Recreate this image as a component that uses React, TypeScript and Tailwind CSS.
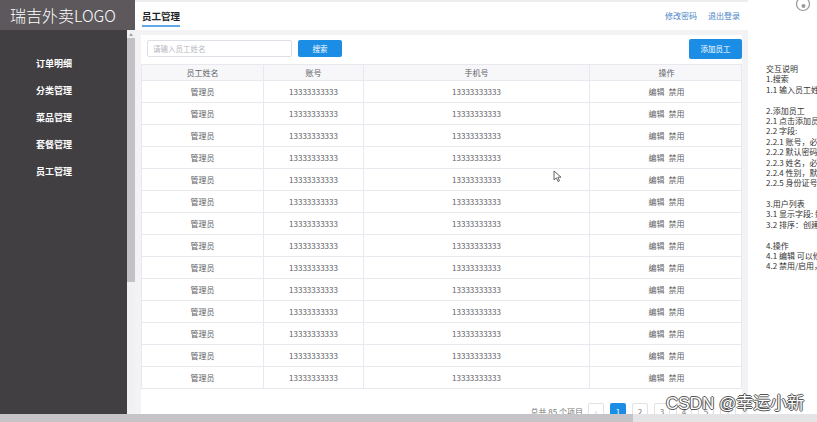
const menus = ['订单明细', '分类管理', '菜品管理', '套餐管理', '员工管理'];

const rows = Array.from({ length: 14 }, () => ({
  name: '管理员',
  account: '13333333333',
  phone: '13333333333',
}));

const notes = [
  '交互说明',
  '1.搜索',
  '1.1 输入员工姓名，点击搜索按钮',
  '',
  '2.添加员工',
  '2.1 点击添加员工按钮，弹出窗口',
  '2.2 字段:',
  '2.2.1 账号，必填，不可重复',
  '2.2.2 默认密码 123456',
  '2.2.3 姓名，必填',
  '2.2.4 性别，默认男',
  '2.2.5 身份证号，必填',
  '',
  '3.用户列表',
  '3.1 显示字段: 姓名、账号、手机号',
  '3.2 排序：创建时间倒序',
  '',
  '4.操作',
  '4.1 编辑 可以修改员工信息',
  '4.2 禁用/启用，管理员不可禁用',
];

const cols = 'grid grid-cols-[122px_100px_226px_153px]';

export default function App() {
  return (
    <div className="relative flex h-[422px] w-[817px] flex-col overflow-hidden bg-white font-['Noto_Sans_CJK_SC','Noto_Sans',sans-serif]">
      <div className="flex h-[414px]">
        <div className="flex w-[748px] flex-col">
          {/* 顶部 */}
          <div className="flex h-[30px] shrink-0">
            <div className="flex w-[135px] items-center bg-[#5c585b] pl-[10px] text-[16px] font-light leading-none text-white">
              瑞吉外卖LOGO
            </div>
            <div className="flex flex-1 items-start justify-between border-t-2 border-[#ededf0] bg-white pl-[7px] pr-[8px] pt-[8px]">
              <div className="border-b-2 border-[#5fa9e8] pb-[3px] text-[9.5px] font-bold leading-[12px] text-[#222]">
                员工管理
              </div>
              <div className="flex gap-[11px] text-[8px] leading-[12px] text-[#4a86c6]">
                <span>修改密码</span>
                <span>退出登录</span>
              </div>
            </div>
          </div>

          <div className="flex flex-1 overflow-hidden">
            {/* 侧边栏 */}
            <div className="flex w-[127px] shrink-0 flex-col gap-[15px] bg-[#423f43] pl-[36px] pt-[28px]">
              {menus.map((m) => (
                <div key={m} className="text-[9px] font-bold leading-[12px] text-white">
                  {m}
                </div>
              ))}
            </div>
            {/* 滚动条 */}
            <div className="flex w-[8px] shrink-0 flex-col items-center bg-[#f1f1f3]">
              <div className="mt-[3px] h-0 w-0 border-x-[2.5px] border-b-[3px] border-x-transparent border-b-[#a3a3a6]" />
              <div className="mt-[2px] h-[244px] w-full bg-[#c3c1c5]" />
            </div>

            {/* 主体 */}
            <div className="flex-1 overflow-hidden bg-[#f3f3f6] px-[6px] pt-[5px]">
              <div className="bg-white pb-[20px]">
                <div className="flex h-[29px] items-center pb-[2px] pl-[6px]">
                  <div className="flex h-[17px] w-[145px] items-center rounded-[2px] border border-[#dcdfe6] pl-[5px] text-[7.5px] text-[#b8b8bd]">
                    请输入员工姓名
                  </div>
                  <div className="ml-[6px] flex h-[17px] w-[44px] items-center justify-center rounded-[2px] bg-[#1b8de5] text-[7.5px] text-white">
                    搜索
                  </div>
                  <div className="ml-auto flex h-[20px] w-[53px] items-center justify-center rounded-[2px] bg-[#1b8de5] text-[7.5px] text-white">
                    添加员工
                  </div>
                </div>

                <div className="border-l border-r border-t border-[#e8e8ee] text-[8px] text-[#606266]">
                  <div className={`${cols} h-[16px] border-b border-[#e8e8ee] bg-[#f7f7fa]`}>
                    {['员工姓名', '账号', '手机号', '操作'].map((h, i) => (
                      <div
                        key={h}
                        className={`flex items-center justify-center ${i < 3 ? 'border-r border-[#e8e8ee]' : ''}`}
                      >
                        {h}
                      </div>
                    ))}
                  </div>
                  {rows.map((r, idx) => (
                    <div key={idx} className={`${cols} h-[22px] border-b border-[#e8e8ee]`}>
                      <div className="flex items-center justify-center border-r border-[#e8e8ee]">{r.name}</div>
                      <div className="flex items-center justify-center border-r border-[#e8e8ee]">{r.account}</div>
                      <div className="flex items-center justify-center border-r border-[#e8e8ee]">{r.phone}</div>
                      <div className="flex items-center justify-center gap-[4px]">
                        <span>编辑</span>
                        <span>禁用</span>
                      </div>
                    </div>
                  ))}
                </div>

                {/* 分页 */}
                <div className="mt-[14px] flex items-center justify-end pr-[6px] text-[8px] text-[#777]">
                  <span className="mr-[5px]">总共 85 个项目</span>
                  <div className="flex gap-[6px]">
                    <div className="flex h-[17px] w-[16px] items-center justify-center rounded-[2px] border border-[#e2e2e6] text-[#bbb]">
                      ‹
                    </div>
                    {[1, 2, 3, 4, 5].map((p) => (
                      <div
                        key={p}
                        className={
                          p === 1
                            ? 'flex h-[17px] w-[16px] items-center justify-center rounded-[2px] bg-[#1b8de5] text-white'
                            : 'flex h-[17px] w-[16px] items-center justify-center rounded-[2px] border border-[#e2e2e6]'
                        }
                      >
                        {p}
                      </div>
                    ))}
                    <div className="flex h-[17px] w-[16px] items-center justify-center rounded-[2px] border border-[#e2e2e6] text-[#bbb]">
                      ›
                    </div>
                  </div>
                </div>
              </div>
            </div>
          </div>
        </div>

        {/* 右侧说明 */}
        <div className="flex-1 overflow-hidden whitespace-nowrap bg-white pl-[18px] pt-[64px] text-[8px] leading-[10.4px] text-[#333]">
          {notes.map((n, i) => (
            <div key={i} className="h-[10.4px]">
              {n}
            </div>
          ))}
        </div>
      </div>

      {/* 底部滚动条 */}
      <div className="flex h-[8px] bg-[#e4e4e6]">
        <div className="h-full w-[633px] bg-[#c6c4c8]" />
      </div>

      {/* 右上角图标 */}
      <svg className="absolute left-[795px] top-[-4px]" width="16" height="16" viewBox="0 0 16 16">
        <circle cx="8" cy="8" r="6.5" fill="none" stroke="#9a9a9e" strokeWidth="1.2" />
        <circle cx="8.5" cy="10" r="2" fill="#9a9a9e" />
      </svg>

      {/* 鼠标指针 */}
      <svg className="absolute left-[553px] top-[170px]" width="10" height="13" viewBox="0 0 10 13">
        <path d="M1 1 L1 10 L3.3 7.8 L5 11.5 L6.5 10.8 L4.9 7.2 L8 7.2 Z" fill="#fff" stroke="#555" strokeWidth="0.9" />
      </svg>

      {/* 水印 */}
      <div className="absolute left-[666px] top-[394px] font-['Liberation_Sans','Noto_Sans_CJK_SC',sans-serif] text-[17px] leading-[20px] text-white [text-shadow:1px_0_0_#555,-1px_0_0_#555,0_1px_0_#555,0_-1px_0_#555]">
        CSDN @幸运小新
      </div>
    </div>
  );
}
